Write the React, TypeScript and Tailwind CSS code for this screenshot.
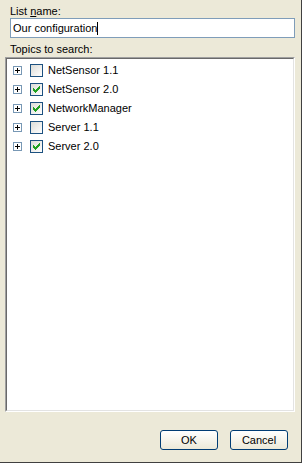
import React from 'react';

const topics = [
  { name: 'NetSensor 1.1', checked: false },
  { name: 'NetSensor 2.0', checked: true },
  { name: 'NetworkManager', checked: true },
  { name: 'Server 1.1', checked: false },
  { name: 'Server 2.0', checked: true },
];

function PlusBox() {
  return (
    <div className="w-[9px] h-[9px] border border-[#7898b5] bg-white flex items-center justify-center">
      <svg width="5" height="5" viewBox="0 0 5 5" shapeRendering="crispEdges">
        <rect x="0" y="2" width="5" height="1" fill="#000" />
        <rect x="2" y="0" width="1" height="5" fill="#000" />
      </svg>
    </div>
  );
}

function CheckBox({ checked }: { checked: boolean }) {
  return (
    <div className="w-[13px] h-[13px] border border-[#1c5180] bg-gradient-to-br from-[#dcdcd7] to-white flex items-center justify-center">
      {checked && (
        <svg width="7" height="7" viewBox="0 0 7 7" shapeRendering="crispEdges">
          <path d="M0 2h1v3h-1zM1 3h1v3h-1zM2 4h1v3h-1zM3 3h1v3h-1zM4 2h1v3h-1zM5 1h1v3h-1zM6 0h1v3h-1z" fill="#21a121" />
        </svg>
      )}
    </div>
  );
}

function XpButton({ label }: { label: string }) {
  return (
    <button className="w-[58px] h-[20px] rounded-[3px] border border-[#003c74] bg-gradient-to-b from-white to-[#ece9d8] text-[11px] text-black flex items-center justify-center">
      {label}
    </button>
  );
}

export default function App() {
  return (
    <div
      className="w-[302px] h-[463px] bg-[#ece9d8] border-r border-b border-[#404040] flex flex-col text-[11px] leading-[13px] text-black"
      style={{ fontFamily: '"Liberation Sans", Arial, sans-serif' }}
    >
      <div className="pl-[10px] mt-[5px]">
        List <span className="underline">n</span>ame:
      </div>
      <div className="ml-[10px] w-[285px] h-[20px] border border-[#7f9db9] bg-white flex items-center px-[2px]">
        <span>Our configuration</span>
        <span className="w-px h-[13px] bg-black" />
      </div>
      <div className="pl-[10px] mt-[5px]">Topics to search:</div>
      <div className="ml-[5px] mt-px w-[290px] h-[355px] border border-t-[#a0a0a0] border-l-[#a0a0a0] border-r-white border-b-white">
        <div className="w-full h-full border border-t-[#696969] border-l-[#696969] border-r-[#e3e3e3] border-b-[#e3e3e3] bg-white pt-[2px]">
          {topics.map((t) => (
            <div key={t.name} className="h-[19px] flex items-center pl-[6px]">
              <PlusBox />
              <div className="ml-[8px]">
                <CheckBox checked={t.checked} />
              </div>
              <span className="ml-[5px]">{t.name}</span>
            </div>
          ))}
        </div>
      </div>
      <div className="mt-[18px] flex justify-end gap-[12px] pr-[13px]">
        <XpButton label="OK" />
        <XpButton label="Cancel" />
      </div>
    </div>
  );
}
